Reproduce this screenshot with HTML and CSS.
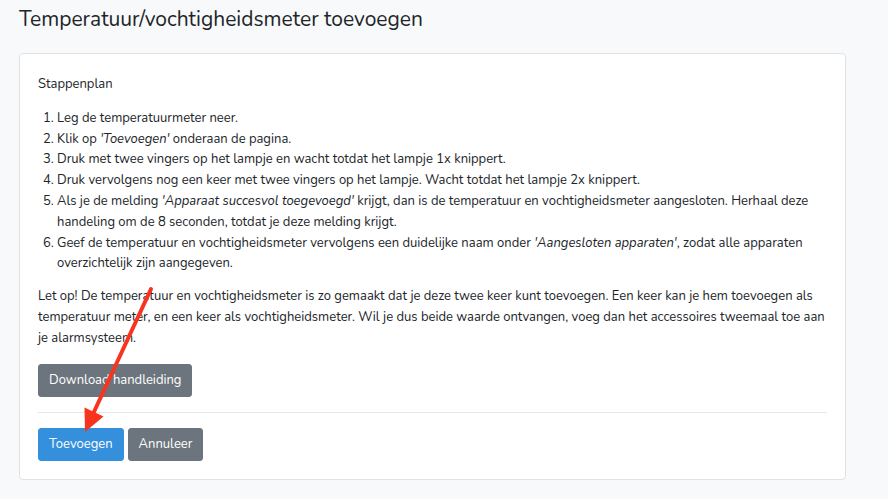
FILE: index.html
```html
<!DOCTYPE html>
<html lang="nl">
<head>
<meta charset="utf-8">
<title>Temperatuur/vochtigheidsmeter toevoegen</title>
<link rel="stylesheet" href="styles.css">
</head>
<body>
<div class="page">
  <h1 class="title">Temperatuur/vochtigheidsmeter toevoegen</h1>
  <div class="card">
    <p class="lead">Stappenplan</p>
    <ol class="steps">
      <li>Leg de temperatuurmeter neer.</li>
      <li>Klik op <em>'Toevoegen'</em> onderaan de pagina.</li>
      <li>Druk met twee vingers op het lampje en wacht totdat het lampje 1x knippert.</li>
      <li>Druk vervolgens nog een keer met twee vingers op het lampje. Wacht totdat het lampje 2x knippert.</li>
      <li>Als je de melding <em>'Apparaat succesvol toegevoegd'</em> krijgt, dan is de temperatuur en vochtigheidsmeter aangesloten. Herhaal deze handeling om de 8 seconden, totdat je deze melding krijgt.</li>
      <li>Geef de temperatuur en vochtigheidsmeter vervolgens een duidelijke naam onder <em>'Aangesloten apparaten'</em>, zodat alle apparaten overzichtelijk zijn aangegeven.</li>
    </ol>
    <p class="note">Let op! De temperatuur en vochtigheidsmeter is zo gemaakt dat je deze twee keer kunt toevoegen. Een keer kan je hem toevoegen als temperatuur meter, en een keer als vochtigheidsmeter. Wil je dus beide waarde ontvangen, voeg dan het accessoires tweemaal toe aan je alarmsysteem.</p>
    <div class="download-row">
      <button class="btn btn-grey">Download handleiding</button>
    </div>
    <hr class="divider">
    <div class="actions">
      <button class="btn btn-blue">Toevoegen</button>
      <button class="btn btn-grey">Annuleer</button>
    </div>
  </div>
</div>
<svg class="arrow" width="888" height="499" viewBox="0 0 888 499" aria-hidden="true">
  <line x1="151" y1="289" x2="93" y2="414" stroke="#f8341f" stroke-width="4" stroke-linecap="round"/>
  <polygon points="85,432 84.5,407.5 103.5,416.5" fill="#f8341f"/>
</svg>
</body>
</html>
```
FILE: styles.css
```css
* { box-sizing: border-box; }
html, body { margin: 0; padding: 0; }
body {
  background: #f8f9fa;
  color: #212529;
  font-family: "Nunito", "Lato", "Open Sans", sans-serif;
  font-size: 13px;
  line-height: 1.6;
  width: 888px;
  height: 499px;
  overflow: hidden;
  position: relative;
}
.page {
  padding: 5px 42px 0 19px;
}
.title {
  margin: 0 0 20px 0;
  font-weight: 400;
  font-size: 21px;
  line-height: 28px;
  color: #212529;
}
.card {
  background: #fff;
  border: 1px solid #e0e2e4;
  border-radius: 4px;
  padding: 20px 18px 18px 18px;
}
.lead { margin: 0 0 13px 0; }
.steps {
  margin: 0 0 12px 0;
  padding-left: 19px;
}
.steps em { font-style: italic; }
.note { margin: 0 0 15px 0; }
.download-row { display: flex; }
.btn {
  font-family: inherit;
  font-size: 13px;
  line-height: 19px;
  padding: 6px 10px;
  border: 1px solid transparent;
  border-radius: 3px;
  color: #fff;
  cursor: pointer;
}
.btn-grey { background: #6c757d; border-color: #6c757d; }
.btn-blue { background: #3490dc; border-color: #3490dc; }
.divider {
  border: 0;
  border-top: 1px solid #e5e6e8;
  margin: 15px 0 15px 0;
}
.actions { display: flex; gap: 4px; }
.arrow {
  position: absolute;
  left: 0;
  top: 0;
  pointer-events: none;
}
```
